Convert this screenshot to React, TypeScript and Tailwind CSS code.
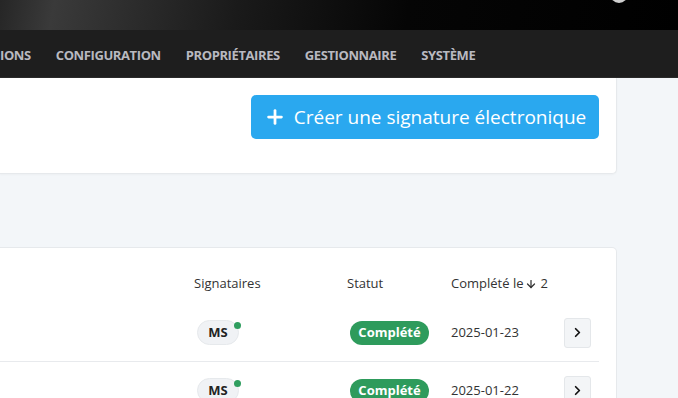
import { Plus, ChevronRight, ArrowDown } from 'lucide-react';

const rows = [
  { initials: 'MS', status: 'Complété', date: '2025-01-23' },
  { initials: 'MS', status: 'Complété', date: '2025-01-22' },
];

const navItems = ['IONS', 'CONFIGURATION', 'PROPRIÉTAIRES', 'GESTIONNAIRE', 'SYSTÈME'];

const App = () => {
  return (
    <div className="w-[678px] h-[398px] overflow-hidden bg-[#f3f6f9] font-['Open_Sans',sans-serif]">
      {/* Top bar */}
      <div className="relative h-[30px] bg-[linear-gradient(100deg,#262626_0%,#3a3a3a_8%,#1a1a1a_35%,#050505_60%,#000_100%)]">
        <div className="absolute right-[50px] top-[-15px] w-[18px] h-[18px] rounded-full bg-[#cfcfcf]" />
      </div>

      {/* Nav */}
      <nav className="h-[48px] bg-[#1e1e1e] flex items-center gap-[25px] pt-[4px] border-b border-[#2a2a2a]">
        {navItems.map((item) => (
          <span key={item} className="text-[13px] font-bold tracking-[-0.4px] text-[#b9b9c0]">
            {item}
          </span>
        ))}
      </nav>

      {/* Action card */}
      <div className="mr-[61px] h-[96px] bg-white border border-l-0 border-t-0 border-[#e6e9ec] rounded-br-[5px] shadow-[0_1px_2px_rgba(0,0,0,0.03)] flex justify-end pt-[17px] pr-[17px]">
        <button className="w-[348px] h-[44px] rounded-[5px] bg-[#2aa8ef] text-white text-[19px] flex items-center justify-center gap-[8px]">
          <Plus className="w-[22px] h-[22px]" strokeWidth={3} />
          <span>Créer une signature électronique</span>
        </button>
      </div>

      {/* Table card */}
      <div className="mt-[73px] mr-[61px] bg-white border border-l-0 border-[#e6e9ec] rounded-tr-[5px] pt-[16px] pr-[17px]">
        <div className="h-[40px] flex items-center text-[13px] text-[#333]">
          <div className="flex-1" />
          <div className="w-[153px]">Signataires</div>
          <div className="w-[104px]">Statut</div>
          <div className="w-[113px] flex items-center">
            Complété le
            <ArrowDown className="w-[12px] h-[12px] ml-[2px] mr-[3px]" strokeWidth={2.5} />
            2
          </div>
          <div className="w-[35px]" />
        </div>
        {rows.map((row, i) => (
          <div key={i} className="h-[58px] flex items-center border-b border-[#e8eaed] text-[13px] text-[#333]">
            <div className="flex-1" />
            <div className="w-[153px]">
              <span className="relative inline-flex items-center justify-center ml-[3px] w-[42px] h-[25px] rounded-full bg-[#f0f2f5] border border-[#e6e9ec] font-bold text-[#222]">
                {row.initials}
                <span className="absolute right-[-3px] top-[1px] w-[7px] h-[7px] rounded-full bg-[#2f9e5f]" />
              </span>
            </div>
            <div className="w-[104px]">
              <span className="inline-flex items-center justify-center ml-[3px] w-[79px] h-[24px] rounded-full bg-[#2e9b5c] text-white font-bold">
                {row.status}
              </span>
            </div>
            <div className="w-[113px]">{row.date}</div>
            <div className="w-[35px]">
              <button className="w-[27px] h-[30px] rounded-[3px] bg-[#f3f5f7] border border-[#e4e7ea] flex items-center justify-center text-[#111]">
                <ChevronRight className="w-[15px] h-[15px]" strokeWidth={2.8} />
              </button>
            </div>
          </div>
        ))}
      </div>
    </div>
  );
};

export default App;
